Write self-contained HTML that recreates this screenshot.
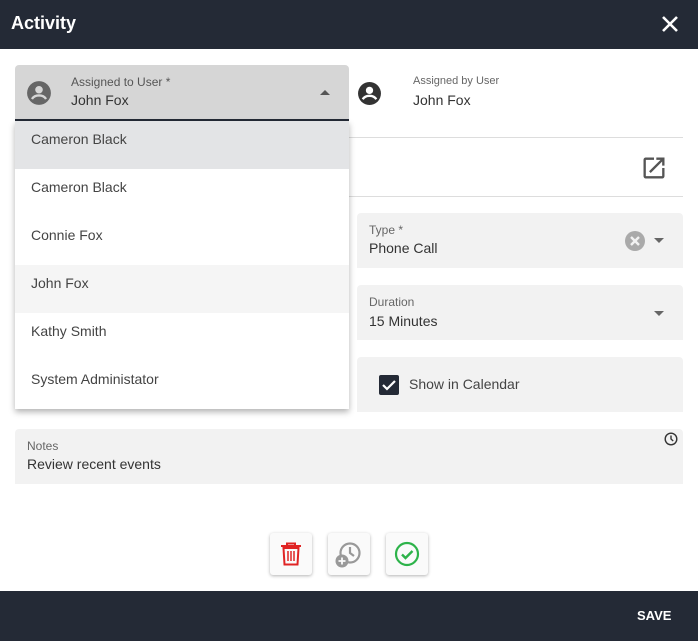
<!DOCTYPE html>
<html><head><style>
*{box-sizing:border-box;margin:0;padding:0}
body{width:698px;height:641px;background:#fff;font-family:"Liberation Sans",Arial,sans-serif;position:relative;overflow:hidden;color:#333}
.abs{position:absolute}
.hdr{left:0;top:0;width:698px;height:49px;background:#242a36;color:#fff}
.ftr{left:0;top:591px;width:698px;height:50px;background:#242a36;color:#fff}
.field{background:#f2f2f2;border-radius:4px 4px 0 0}
.lbl{font-size:12px;color:#666}
.val{font-size:14px;color:#333}
.item{position:absolute;left:0;width:334px;height:48px;font-size:14px;color:#444;padding-left:16px;line-height:36px}
.btn{position:absolute;top:533px;width:42px;height:42px;background:#fafafa;border-radius:3px;box-shadow:0 1px 3px rgba(0,0,0,.3)}
</style></head><body>
<div class="abs hdr"><div class="abs" style="left:11px;top:13px;font-size:18px;font-weight:bold">Activity</div>
<svg class="abs" style="left:661px;top:15px" width="18" height="18" viewBox="0 0 18 18"><path d="M2 2L16 16M16 2L2 16" stroke="#fff" stroke-width="2.6"/></svg></div>

<div class="abs" style="left:15px;top:137px;width:668px;height:1px;background:#ddd"></div>
<div class="abs" style="left:15px;top:196px;width:668px;height:1px;background:#ddd"></div>
<svg class="abs" style="left:640px;top:154px" width="28" height="28" viewBox="0 0 24 24"><path d="M19 19H5V5h7V3H5a2 2 0 0 0-2 2v14a2 2 0 0 0 2 2h14a2 2 0 0 0 2-2v-7h-2v7zM14 3v2h3.59l-9.83 9.83 1.41 1.41L19 6.41V10h2V3h-7z" fill="#555"/></svg>

<svg class="abs" style="left:357px;top:81px" width="25" height="25" viewBox="0 0 24 24"><circle cx="12" cy="12" r="11" fill="#333"/><circle cx="12" cy="9" r="3.5" fill="#fff"/><path d="M5.5 17.5c1.5-2.5 4-3.3 6.5-3.3s5 .8 6.5 3.3" stroke="#fff" stroke-width="2.2" fill="none"/></svg>
<div class="abs lbl" style="left:413px;top:75px;font-size:11px">Assigned by User</div>
<div class="abs val" style="left:413px;top:92px">John Fox</div>

<div class="abs field" style="left:357px;top:213px;width:326px;height:55px"></div>
<div class="abs lbl" style="left:369px;top:223px">Type *</div>
<div class="abs val" style="left:369px;top:240px">Phone Call</div>
<svg class="abs" style="left:625px;top:231px" width="20" height="20" viewBox="0 0 20 20"><circle cx="10" cy="10" r="10" fill="#aaa"/><path d="M6 6L14 14M14 6L6 14" stroke="#f2f2f2" stroke-width="2.4"/></svg>
<svg class="abs" style="left:654px;top:238px" width="10" height="6"><path d="M0 0h10L5 5z" fill="#666"/></svg>

<div class="abs field" style="left:357px;top:285px;width:326px;height:55px"></div>
<div class="abs lbl" style="left:369px;top:295px">Duration</div>
<div class="abs val" style="left:369px;top:313px">15 Minutes</div>
<svg class="abs" style="left:654px;top:311px" width="10" height="6"><path d="M0 0h10L5 5z" fill="#666"/></svg>

<div class="abs field" style="left:357px;top:357px;width:326px;height:55px"></div>
<svg class="abs" style="left:379px;top:375px" width="20" height="20" viewBox="0 0 20 20"><rect width="20" height="20" rx="2" fill="#242a36"/><path d="M4 10l4 4 8-8" stroke="#fff" stroke-width="2.2" fill="none"/></svg>
<div class="abs val" style="left:409px;top:376px;color:#444">Show in Calendar</div>

<div class="abs field" style="left:15px;top:429px;width:668px;height:55px"></div>
<div class="abs lbl" style="left:27px;top:439px">Notes</div>
<div class="abs val" style="left:27px;top:456px">Review recent events</div>
<svg class="abs" style="left:664px;top:432px" width="14" height="14" viewBox="0 0 14 14"><circle cx="7" cy="7" r="5.8" stroke="#333" stroke-width="1.4" fill="none"/><path d="M7 3.5V7l2.2 2" stroke="#333" stroke-width="1.4" fill="none"/></svg>

<!-- select -->
<div class="abs" style="left:15px;top:65px;width:334px;height:56px;background:#d6d6d6;border-radius:4px 4px 0 0;border-bottom:2px solid #242a36"></div>
<svg class="abs" style="left:26px;top:80px" width="26" height="26" viewBox="0 0 24 24"><circle cx="12" cy="12" r="11" fill="#666"/><circle cx="12" cy="9" r="3.5" fill="#d6d6d6"/><path d="M5.5 17.5c1.5-2.5 4-3.3 6.5-3.3s5 .8 6.5 3.3" stroke="#d6d6d6" stroke-width="2.2" fill="none"/></svg>
<div class="abs lbl" style="left:71px;top:75px;color:#555">Assigned to User *</div>
<div class="abs val" style="left:71px;top:92px">John Fox</div>
<svg class="abs" style="left:320px;top:90px" width="10" height="6"><path d="M0 5h10L5 0z" fill="#555"/></svg>

<div class="abs" style="left:15px;top:121px;width:334px;height:288px;background:#fff;box-shadow:0 3px 6px rgba(0,0,0,.3)">
<div class="item" style="top:0;background:#e3e4e6">Cameron Black</div>
<div class="item" style="top:48px">Cameron Black</div>
<div class="item" style="top:96px">Connie Fox</div>
<div class="item" style="top:144px;background:#f5f5f5">John Fox</div>
<div class="item" style="top:192px">Kathy Smith</div>
<div class="item" style="top:240px">System Administator</div>
</div>

<div class="btn" style="left:270px"><svg class="abs" style="left:10px;top:9px" width="22" height="24" viewBox="0 0 22 24"><path d="M7 3V1.5h8V3M1 4h20" stroke="#e02424" stroke-width="2" fill="none"/><path d="M3.5 6h15l-1 16.5h-13z" stroke="#e02424" stroke-width="2" fill="none"/><path d="M8 9v10M11 9v10M14 9v10" stroke="#e02424" stroke-width="1.5"/></svg></div>
<div class="btn" style="left:328px"><svg class="abs" style="left:6px;top:8px" width="28" height="28" viewBox="0 0 28 28"><circle cx="16" cy="12" r="9.5" stroke="#999" stroke-width="2.2" fill="none"/><path d="M16 6v6l4 3" stroke="#999" stroke-width="2.2" fill="none"/><circle cx="8" cy="20" r="6.5" fill="#999"/><path d="M8 16.5v7M4.5 20h7" stroke="#fafafa" stroke-width="1.8"/></svg></div>
<div class="btn" style="left:386px"><svg class="abs" style="left:8px;top:8px" width="26" height="26" viewBox="0 0 26 26"><circle cx="13" cy="13" r="11" stroke="#2db34a" stroke-width="2.2" fill="none"/><path d="M8 13.5l3.5 3.5 7-7" stroke="#2db34a" stroke-width="2.4" fill="none"/></svg></div>

<div class="abs ftr"><div class="abs" style="left:637px;top:17px;font-size:13px;font-weight:bold">SAVE</div></div>
</body></html>
